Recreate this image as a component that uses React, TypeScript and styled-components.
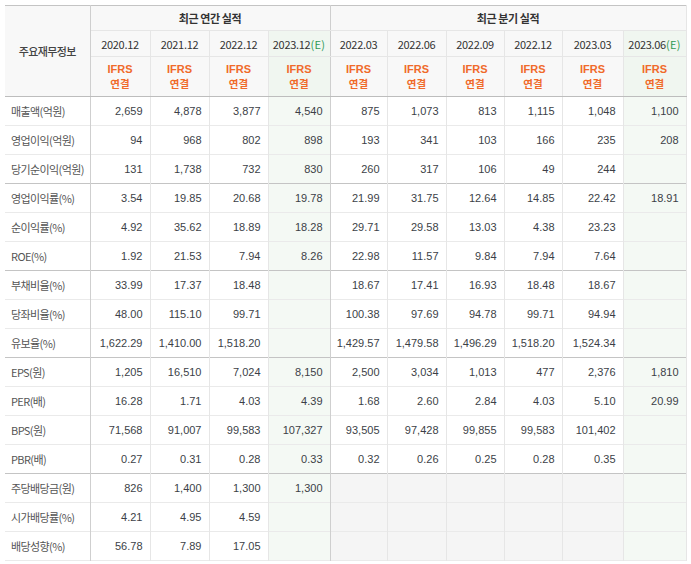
import React from 'react';
import styled, { createGlobalStyle, css } from 'styled-components';

const GlobalStyle = createGlobalStyle`
  html, body {
    margin: 0;
    padding: 0;
    background: #ffffff;
  }
  body {
    font-family: 'Liberation Sans', 'Noto Sans CJK KR', sans-serif;
  }
`;

type Row = {
  label: string;
  annual: string[];
  quarter: string[];
  split?: boolean;
  noQuarter?: boolean;
};

const annualHeads = ['2020.12', '2021.12', '2022.12', '2023.12'];
const quarterHeads = ['2022.03', '2022.06', '2022.09', '2022.12', '2023.03', '2023.06'];
const colWidths = [85, 60, 59, 59, 62, 57, 59, 58, 58, 61, 63];

const rows: Row[] = [
  { label: '매출액(억원)', annual: ['2,659', '4,878', '3,877', '4,540'], quarter: ['875', '1,073', '813', '1,115', '1,048', '1,100'] },
  { label: '영업이익(억원)', annual: ['94', '968', '802', '898'], quarter: ['193', '341', '103', '166', '235', '208'] },
  { label: '당기순이익(억원)', annual: ['131', '1,738', '732', '830'], quarter: ['260', '317', '106', '49', '244', ''], split: true },
  { label: '영업이익률(%)', annual: ['3.54', '19.85', '20.68', '19.78'], quarter: ['21.99', '31.75', '12.64', '14.85', '22.42', '18.91'] },
  { label: '순이익률(%)', annual: ['4.92', '35.62', '18.89', '18.28'], quarter: ['29.71', '29.58', '13.03', '4.38', '23.23', ''] },
  { label: 'ROE(%)', annual: ['1.92', '21.53', '7.94', '8.26'], quarter: ['22.98', '11.57', '9.84', '7.94', '7.64', ''], split: true },
  { label: '부채비율(%)', annual: ['33.99', '17.37', '18.48', ''], quarter: ['18.67', '17.41', '16.93', '18.48', '18.67', ''] },
  { label: '당좌비율(%)', annual: ['48.00', '115.10', '99.71', ''], quarter: ['100.38', '97.69', '94.78', '99.71', '94.94', ''] },
  { label: '유보율(%)', annual: ['1,622.29', '1,410.00', '1,518.20', ''], quarter: ['1,429.57', '1,479.58', '1,496.29', '1,518.20', '1,524.34', ''], split: true },
  { label: 'EPS(원)', annual: ['1,205', '16,510', '7,024', '8,150'], quarter: ['2,500', '3,034', '1,013', '477', '2,376', '1,810'] },
  { label: 'PER(배)', annual: ['16.28', '1.71', '4.03', '4.39'], quarter: ['1.68', '2.60', '2.84', '4.03', '5.10', '20.99'] },
  { label: 'BPS(원)', annual: ['71,568', '91,007', '99,583', '107,327'], quarter: ['93,505', '97,428', '99,855', '99,583', '101,402', ''] },
  { label: 'PBR(배)', annual: ['0.27', '0.31', '0.28', '0.33'], quarter: ['0.32', '0.26', '0.25', '0.28', '0.35', ''], split: true },
  { label: '주당배당금(원)', annual: ['826', '1,400', '1,300', '1,300'], quarter: ['', '', '', '', '', ''], noQuarter: true },
  { label: '시가배당률(%)', annual: ['4.21', '4.95', '4.59', ''], quarter: ['', '', '', '', '', ''], noQuarter: true },
  { label: '배당성향(%)', annual: ['56.78', '7.89', '17.05', ''], quarter: ['', '', '', '', '', ''], noQuarter: true },
];

const App: React.FC = () => {
  return (
    <Page>
      <GlobalStyle />
      <Table>
        <colgroup>
          {colWidths.map((w, i) => (
            <col key={i} style={{ width: w }} />
          ))}
        </colgroup>
        <thead>
          <GroupRow>
            <TitleCell rowSpan={3}>주요재무정보</TitleCell>
            <GroupCell colSpan={4} $divider>
              최근 연간 실적
            </GroupCell>
            <GroupCell colSpan={6}>최근 분기 실적</GroupCell>
          </GroupRow>
          <DateRow>
            {annualHeads.map((d, i) => (
              <DateCell key={d} $estimate={i === 3} $divider={i === 3}>
                {d}
                {i === 3 && <Estimate>(E)</Estimate>}
              </DateCell>
            ))}
            {quarterHeads.map((d, i) => (
              <DateCell key={d} $estimate={i === 5}>
                {d}
                {i === 5 && <Estimate>(E)</Estimate>}
              </DateCell>
            ))}
          </DateRow>
          <BasisRow>
            {[...annualHeads, ...quarterHeads].map((d, i) => (
              <BasisCell key={d + i} $estimate={i === 3 || i === 9} $divider={i === 3}>
                <BasisStd>IFRS</BasisStd>
                <BasisScope>연결</BasisScope>
              </BasisCell>
            ))}
          </BasisRow>
        </thead>
        <tbody>
          {rows.map((r) => (
            <DataRow key={r.label} $split={r.split}>
              <LabelCell>{r.label}</LabelCell>
              {r.annual.map((v, i) => (
                <NumCell key={'a' + i} $estimate={i === 3} $divider={i === 3}>
                  {v}
                </NumCell>
              ))}
              {r.quarter.map((v, i) => (
                <NumCell key={'q' + i} $estimate={i === 5} $empty={r.noQuarter && i !== 5}>
                  {v}
                </NumCell>
              ))}
            </DataRow>
          ))}
        </tbody>
      </Table>
    </Page>
  );
};
export default App;

const Page = styled.div`
  padding: 5px 0 0 5px;
`;

const Table = styled.table`
  width: 681px;
  table-layout: fixed;
  border-collapse: collapse;
  border-top: 1px solid #c4c4c4;
  border-bottom: 1px solid #c4c4c4;
`;

type CellProps = { $estimate?: boolean; $divider?: boolean; $empty?: boolean };

const cellBase = css<CellProps>`
  padding: 0;
  border-left: 1px solid #e6e6e6;
  border-right: 1px solid ${(p) => (p.$divider ? '#cfcfcf' : '#e6e6e6')};
  box-sizing: border-box;
`;

const headBg = css<CellProps>`
  background: ${(p) => (p.$estimate ? '#f0f6f0' : '#f8f8f8')};
`;

const GroupRow = styled.tr`
  height: 25px;
`;

const DateRow = styled.tr`
  height: 26px;
`;

const BasisRow = styled.tr`
  height: 40px;
`;

const TitleCell = styled.th`
  padding: 0;
  background: #f8f8f8;
  border-right: 1px solid #cfcfcf;
  border-bottom: 1px solid #bdbdbd;
  font-family: 'Noto Sans CJK KR', sans-serif;
  font-size: 11px;
  font-weight: 500;
  letter-spacing: -0.6px;
  color: #444;
  text-align: center;
`;

const GroupCell = styled.th<CellProps>`
  ${cellBase};
  background: #f8f8f8;
  border-bottom: 1px solid #e6e6e6;
  font-family: 'Noto Sans CJK KR', sans-serif;
  font-size: 11px;
  font-weight: 700;
  letter-spacing: -0.4px;
  color: #333;
  text-align: center;
`;

const DateCell = styled.th<CellProps>`
  ${cellBase};
  ${headBg};
  border-bottom: 1px solid #e6e6e6;
  font-family: 'Noto Sans CJK KR', sans-serif;
  font-size: 11px;
  font-weight: 400;
  letter-spacing: -0.3px;
  color: #333;
  text-align: center;
  white-space: nowrap;
`;

const Estimate = styled.span`
  color: #2f9a55;
  letter-spacing: 0.3px;
`;

const BasisCell = styled.th<CellProps>`
  ${cellBase};
  ${headBg};
  border-bottom: 1px solid #bdbdbd;
  font-weight: 700;
  color: #f06a2a;
  text-align: center;
`;

const BasisStd = styled.div`
  height: 14px;
  line-height: 14px;
  font-family: 'Liberation Sans', sans-serif;
  font-size: 11px;
`;

const BasisScope = styled.div`
  height: 15px;
  line-height: 15px;
  font-family: 'Noto Sans CJK KR', sans-serif;
  font-size: 10.5px;
`;

const DataRow = styled.tr<{ $split?: boolean }>`
  height: 29px;
  border-bottom: 1px solid ${(p) => (p.$split ? '#c4c4c4' : '#eaeaea')};
`;

const LabelCell = styled.td`
  padding: 0 0 0 6px;
  border-right: 1px solid #cfcfcf;
  font-family: 'Noto Sans CJK KR', sans-serif;
  font-size: 11px;
  letter-spacing: -0.6px;
  color: #555;
  white-space: nowrap;
  overflow: hidden;
`;

const NumCell = styled.td<CellProps>`
  ${cellBase};
  padding-right: 7px;
  background: ${(p) => (p.$estimate ? '#f4f9f4' : p.$empty ? '#f5f5f5' : '#ffffff')};
  font-family: 'Liberation Sans', sans-serif;
  font-size: 11px;
  color: #3c3f47;
  text-align: right;
  white-space: nowrap;
`;
